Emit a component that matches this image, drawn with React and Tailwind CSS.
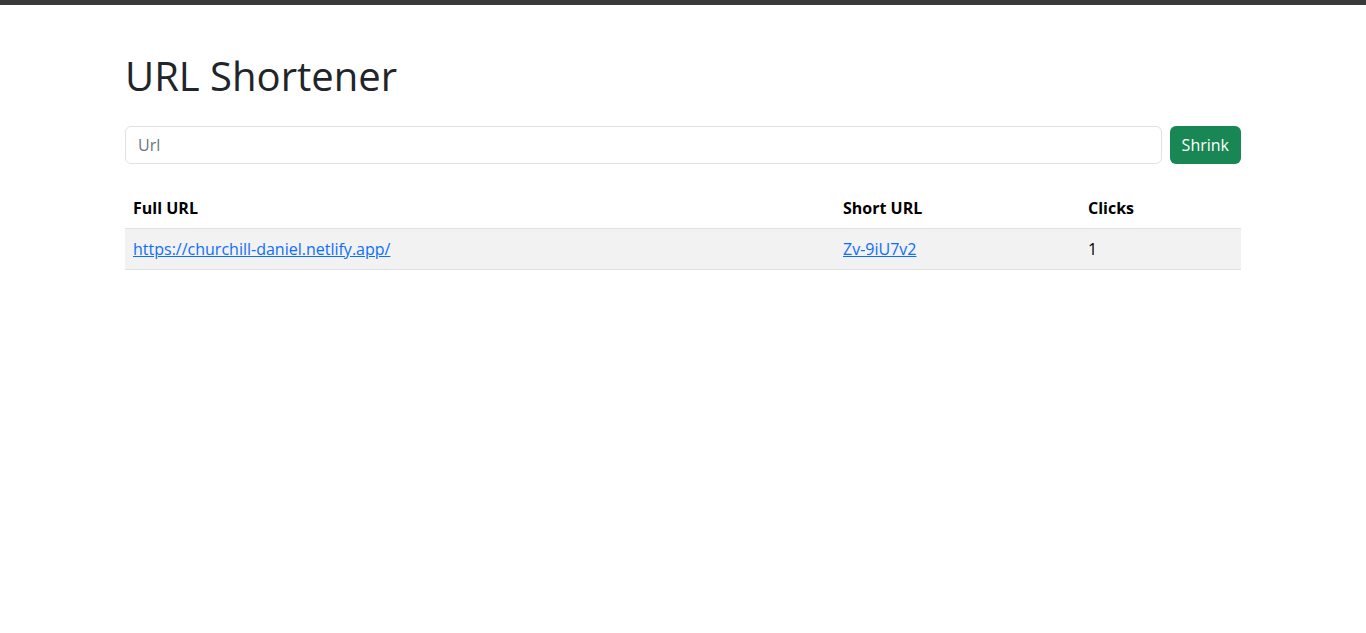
export default function App() {
  return (
    <div className="min-h-[633px] bg-white text-[#212529]" style={{ fontFamily: '"Open Sans", "Noto Sans", sans-serif' }}>
      <div className="h-[5px] bg-[#3a3a3a]" />
      <div className="mx-auto w-[1140px] px-3">
        <h1 className="mt-[47px] mb-[26px] text-[40px] leading-[48px] font-medium">URL Shortener</h1>
        <div className="flex gap-2">
          <input
            className="h-[38px] flex-1 rounded-md border border-[#dee2e6] px-3 text-base outline-none placeholder:text-[#6c757d]"
            placeholder="Url"
          />
          <button className="h-[38px] rounded-md bg-[#198754] px-3 text-base text-white">Shrink</button>
        </div>
        <table className="mt-[24px] w-full border-collapse text-base">
          <thead>
            <tr className="border-b border-[#dee2e6]">
              <th className="w-[710px] px-2 py-2 text-left font-bold text-black">Full URL</th>
              <th className="w-[245px] px-2 py-2 text-left font-bold text-black">Short URL</th>
              <th className="px-2 py-2 text-left font-bold text-black">Clicks</th>
            </tr>
          </thead>
          <tbody>
            <tr className="border-b border-[#dee2e6] bg-[#f2f2f2]">
              <td className="px-2 py-2">
                <a href="#" className="text-[#0d6efd] underline">https://churchill-daniel.netlify.app/</a>
              </td>
              <td className="px-2 py-2">
                <a href="#" className="text-[#0d6efd] underline">Zv-9iU7v2</a>
              </td>
              <td className="px-2 py-2 text-black">1</td>
            </tr>
          </tbody>
        </table>
      </div>
    </div>
  );
}
